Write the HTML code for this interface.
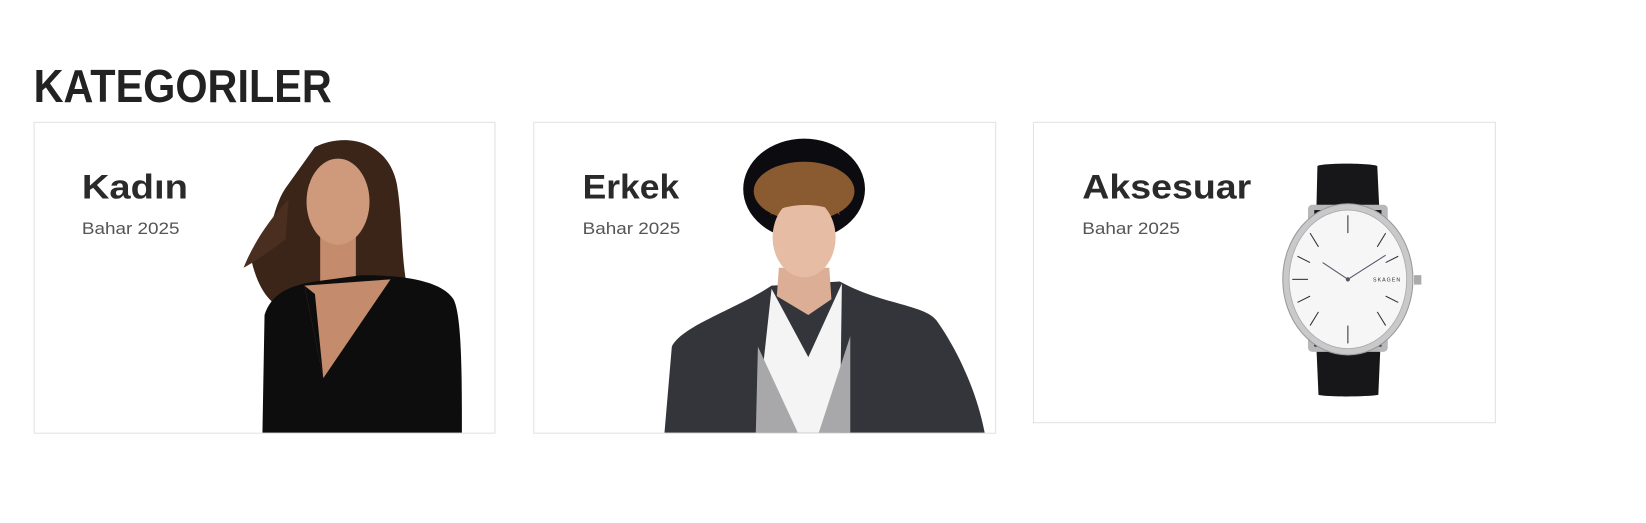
<!DOCTYPE html>
<html><head><meta charset="utf-8"><style>
html,body{margin:0;padding:0;background:#fff;width:1646px;height:523px;overflow:hidden}
svg{display:block}
text{font-family:"Liberation Sans",sans-serif}
</style></head><body>
<svg width="1646" height="523" viewBox="0 0 1568 498" preserveAspectRatio="none">
<rect width="1568" height="498" fill="#fff"/>
<text x="32" y="97" font-size="44" font-weight="bold" fill="#222" textLength="284" lengthAdjust="spacingAndGlyphs">KATEGORILER</text>

<!-- card 1 -->
<rect x="32.5" y="116.5" width="439" height="296" fill="#fff" stroke="#e2e2e2"/>
<path d="M300,140 C330,125 370,135 378,175 C385,215 380,260 395,300 L300,300 C270,300 250,290 240,250 C260,240 255,200 275,175 Z" fill="#3b2418"/>
<path d="M275,190 C255,210 240,235 232,255 C250,245 262,235 272,228 Z" fill="#4a2e20"/>
<rect x="305" y="215" width="34" height="60" fill="#c48b6c"/>
<ellipse cx="322" cy="192" rx="30" ry="41" fill="#cf9a7b"/>
<path d="M295,175 C300,140 345,135 355,165 L352,150 C340,130 300,130 292,160 Z" fill="#3b2418"/>
<path d="M250,412 L252,300 C258,280 275,272 300,268 L345,262 C380,262 420,266 432,285 C440,300 440,360 440,412 Z" fill="#0d0d0d"/>
<path d="M290,272 L308,360 L372,266 Z" fill="#c48b6c"/>
<path d="M290,272 L308,360 L300,280 Z" fill="#0d0d0d"/>

<text x="78" y="189" font-size="33" font-weight="bold" fill="#2a2a2a" textLength="101" lengthAdjust="spacingAndGlyphs">Kadın</text>
<text x="78" y="223" font-size="16" fill="#555" textLength="93" lengthAdjust="spacingAndGlyphs">Bahar 2025</text>

<!-- card 2 -->
<rect x="508.5" y="116.5" width="440" height="296" fill="#fff" stroke="#e2e2e2"/>
<path d="M633,412 L640,330 C650,310 700,295 735,272 L800,268 C840,290 880,290 892,305 C910,330 930,370 938,412 Z" fill="#33353a"/>
<path d="M735,275 L770,340 L802,270 L800,412 L720,412 Z" fill="#f4f4f4"/>
<path d="M722,330 L760,412 L720,412 Z" fill="#a8a8aa"/>
<path d="M810,320 L810,412 L780,412 Z" fill="#a8a8aa"/>
<path d="M742,255 L790,255 L792,285 L770,300 L740,282 Z" fill="#dcae95"/>
<ellipse cx="766" cy="180" rx="58" ry="48" fill="#0c0c10"/>
<ellipse cx="766" cy="182" rx="48" ry="28" fill="#8a5a30"/>
<ellipse cx="766" cy="226" rx="30" ry="38" fill="#e6bda4"/>
<path d="M734,205 C740,180 795,178 800,205 C790,192 745,192 734,205 Z" fill="#8a5a30"/>

<text x="555" y="189" font-size="33" font-weight="bold" fill="#2a2a2a" textLength="92" lengthAdjust="spacingAndGlyphs">Erkek</text>
<text x="555" y="223" font-size="16" fill="#555" textLength="93" lengthAdjust="spacingAndGlyphs">Bahar 2025</text>

<!-- card 3 -->
<rect x="984.5" y="116.5" width="440" height="286" fill="#fff" stroke="#e2e2e2"/>
<path d="M1255,158 C1260,155 1305,155 1312,158 L1314,200 L1254,200 Z" fill="#17171a"/>
<path d="M1254,330 L1315,330 L1313,376 C1300,378 1265,378 1256,376 Z" fill="#17171a"/>
<rect x="1246" y="195" width="76" height="140" rx="4" fill="#b8b8ba"/>
<rect x="1252" y="200" width="64" height="130" fill="#1a1a1c"/>
<rect x="1347" y="262" width="7" height="9" fill="#aaa"/>
<ellipse cx="1284" cy="266" rx="62" ry="72" fill="#c9c9cb" stroke="#999" stroke-width="1"/>
<ellipse cx="1284" cy="266" rx="56" ry="66" fill="#f6f6f6" stroke="#aaa" stroke-width="0.8"/>
<g stroke="#333" stroke-width="1">
<line x1="1284" y1="205" x2="1284" y2="222"/>
<line x1="1284" y1="310" x2="1284" y2="327"/>
<line x1="1231" y1="266" x2="1246" y2="266"/>
<line x1="1312" y1="235" x2="1320" y2="222"/>
<line x1="1256" y1="235" x2="1248" y2="222"/>
<line x1="1312" y1="297" x2="1320" y2="310"/>
<line x1="1256" y1="297" x2="1248" y2="310"/>
<line x1="1320" y1="250" x2="1332" y2="244"/>
<line x1="1248" y1="250" x2="1236" y2="244"/>
<line x1="1320" y1="282" x2="1332" y2="288"/>
<line x1="1248" y1="282" x2="1236" y2="288"/>
<line x1="1284" y1="266" x2="1260" y2="250" stroke="#556"/>
<line x1="1284" y1="266" x2="1320" y2="243" stroke="#556"/>
</g>
<circle cx="1284" cy="266" r="2" fill="#556"/>
<text x="1308" y="268" font-size="5" fill="#333" letter-spacing="1">SKAGEN</text>

<text x="1031" y="189" font-size="33" font-weight="bold" fill="#2a2a2a" textLength="161" lengthAdjust="spacingAndGlyphs">Aksesuar</text>
<text x="1031" y="223" font-size="16" fill="#555" textLength="93" lengthAdjust="spacingAndGlyphs">Bahar 2025</text>
</svg>
</body></html>
